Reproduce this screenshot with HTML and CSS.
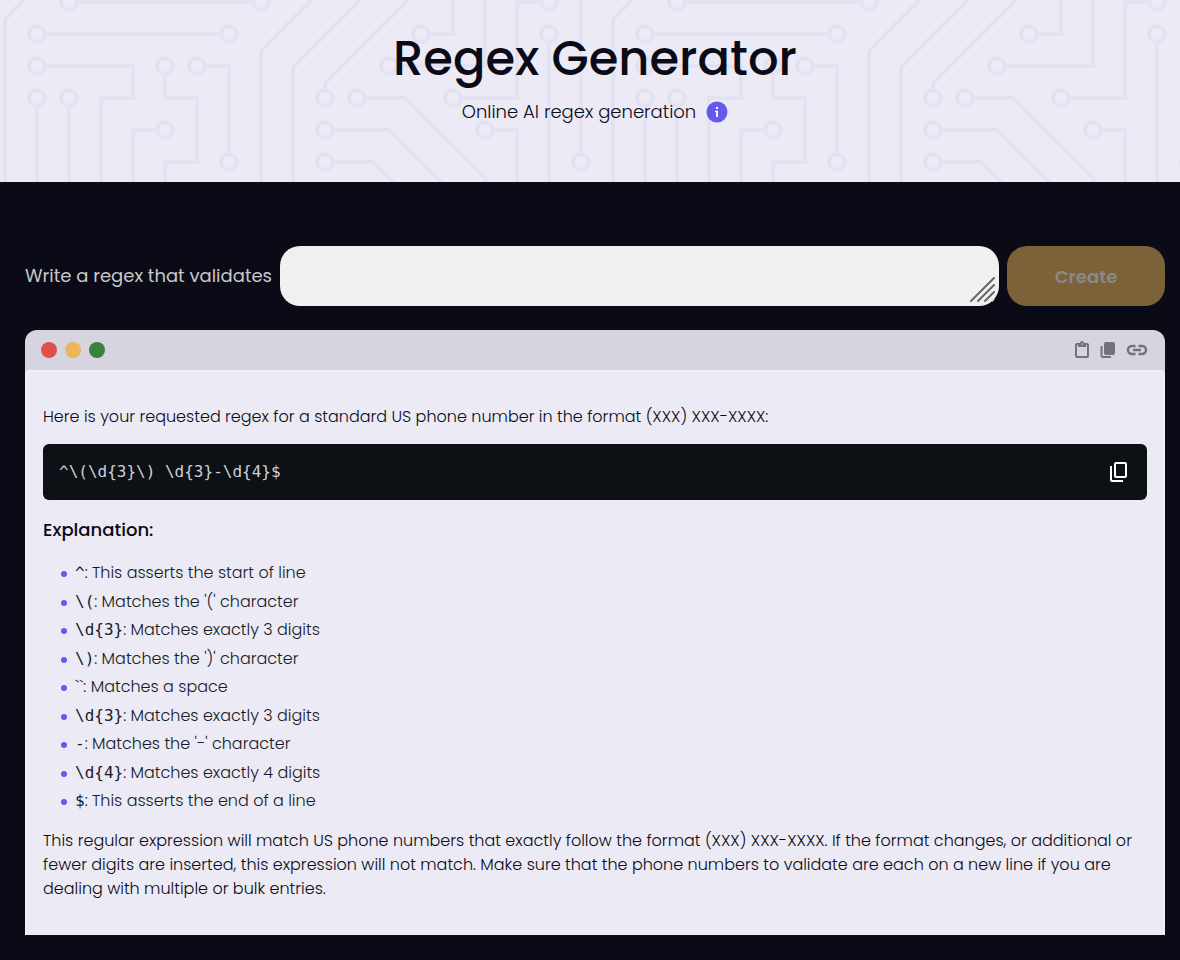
FILE: index.html
```html
<!DOCTYPE html>
<html lang="en">
<head>
  <meta charset="UTF-8">
  <meta name="viewport" content="width=device-width, initial-scale=1.0">
  <title>Regex Generator</title>
  <link rel="stylesheet" href="styles.css">
</head>
<body>
  <header class="hero">
    <h1 class="hero-title">Regex Generator</h1>
    <div class="hero-subtitle">
      <p>Online AI regex generation</p>
      <button class="info-button" type="button" aria-label="More information">
        <svg viewBox="0 0 22 22" width="22" height="22">
          <circle cx="11" cy="11" r="10.5" fill="#6459ec"/>
          <path d="M10 6h2v2h-2zM10 9.800h2v6.200h-2z" fill="#fff"/>
          <path d="M9 9.800h3v1.200H9z" fill="#fff"/>
        </svg>
      </button>
    </div>
  </header>

  <main class="content">
    <form class="prompt">
      <label class="prompt-label" for="prompt">Write a regex that validates</label>
      <div class="prompt-field">
        <textarea class="prompt-input" id="prompt" rows="1"></textarea>
        <svg class="prompt-grip" viewBox="0 0 28 28" width="28" height="28">
          <path d="M2 25 25 2M9 25 25 9M16 25 25 16" fill="none" stroke="#666" stroke-width="2" stroke-linecap="round"/>
          <path d="M23 26l3-3" fill="none" stroke="#999" stroke-width="1"/>
        </svg>
      </div>
      <button class="create-button" type="submit" disabled>Create</button>
    </form>

    <section class="window">
      <div class="window-bar">
        <div class="window-dots">
          <span class="dot red"></span>
          <span class="dot yellow"></span>
          <span class="dot green"></span>
        </div>
        <div class="window-actions">
          <button type="button" aria-label="Paste">
            <svg viewBox="0 0 16 18" width="16" height="18">
              <path d="M3 3h10a1 1 0 0 1 1 1v11a1 1 0 0 1-1 1H3a1 1 0 0 1-1-1V4a1 1 0 0 1 1-1z" fill="none" stroke="#73717c" stroke-width="2"/>
              <path d="M4 2h2a2 2 0 0 1 4 0h2v4H4z" fill="#73717c"/>
              <circle cx="8" cy="3" r=".8" fill="#d6d4de"/>
            </svg>
          </button>
          <button type="button" aria-label="Copy">
            <svg viewBox="0 0 16 18" width="16" height="18">
              <rect x="4" y="1" width="11" height="13" rx="2" fill="#73717c"/>
              <path d="M1.500 5v9.500a1.500 1.500 0 0 0 1.500 1.500h8" fill="none" stroke="#73717c" stroke-width="2"/>
            </svg>
          </button>
          <button type="button" aria-label="Copy link">
            <svg viewBox="0 0 22 18" width="22" height="18">
              <path d="M9.500 5H6a4 4 0 0 0 0 8h3.500M12.500 5H16a4 4 0 0 1 0 8h-3.500M7 9h8" fill="none" stroke="#73717c" stroke-width="2.400"/>
            </svg>
          </button>
        </div>
      </div>

      <div class="window-body">
        <p>Here is your requested regex for a standard US phone number in the format (XXX) XXX-XXXX:</p>
        <div class="code-block">
          <code>^\(\d{3}\) \d{3}-\d{4}$</code>
          <button type="button" aria-label="Copy code">
            <svg viewBox="0 0 20 22" width="20" height="22">
              <rect x="6" y="2" width="11" height="14" rx="1" fill="none" stroke="#fff" stroke-width="2"/>
              <path d="M2 5v14a1 1 0 0 0 1 1h11" fill="none" stroke="#fff" stroke-width="2"/>
            </svg>
          </button>
        </div>
        <h2>Explanation:</h2>
        <ul>
          <li><code>^</code>: This asserts the start of line</li>
          <li><code>\(</code>: Matches the '(' character</li>
          <li><code>\d{3}</code>: Matches exactly 3 digits</li>
          <li><code>\)</code>: Matches the ')' character</li>
          <li>``: Matches a space</li>
          <li><code>\d{3}</code>: Matches exactly 3 digits</li>
          <li><code>-</code>: Matches the '-' character</li>
          <li><code>\d{4}</code>: Matches exactly 4 digits</li>
          <li><code>$</code>: This asserts the end of a line</li>
        </ul>
        <p>This regular expression will match US phone numbers that exactly follow the format (XXX) XXX-XXXX. If the format changes, or additional or fewer digits are inserted, this expression will not match. Make sure that the phone numbers to validate are each on a new line if you are dealing with multiple or bulk entries.</p>
      </div>
    </section>
  </main>
</body>
</html>
```
FILE: styles.css
```css
/* General Reset */
* {
  margin: 0;
  padding: 0;
  box-sizing: border-box;
}

body {
  font-family: Poppins, Inter, sans-serif;
  font-size: 16px;
  font-weight: 300;
  line-height: 24px;
  color: #0b0b17;
  background-color: #0b0b17;
}

button {
  border: none;
  background: none;
  font-family: inherit;
  cursor: pointer;
}

svg {
  display: block;
}

/* Hero with circuit board pattern */
.hero {
  display: flex;
  flex-direction: column;
  align-items: center;
  gap: 9px;
  padding: 29px 15px 56px 25px;
  background-color: #eceaf4;
  background-image: url("data:image/svg+xml,%3Csvg xmlns='http://www.w3.org/2000/svg' width='608' height='182' fill='none' stroke='%23e3e2f3' stroke-width='4'%3E%3Cpath d='M25-1 5 19V182M79 2H251M47 34H219M47 66H133V98H101V182M37 108V182M69 108V182M165 76V98H197V162H165V182M207 66H229V152M155 130H133V182M312-1 261 51V182M361-1 293 67V182M409-1 325 83V88M367 98H405L485 178V182M335 130H389L441 182M335 162H373L393 182M431 34H453V0M399 66H485V0M463 98H517V0M517 2H539M495 130H517V182M549 44V182M581 0V152'/%3E%3Cg%3E%3Ccircle cx='69' cy='2' r='8'/%3E%3Ccircle cx='261' cy='2' r='8'/%3E%3Ccircle cx='37' cy='34' r='8'/%3E%3Ccircle cx='229' cy='34' r='8'/%3E%3Ccircle cx='37' cy='66' r='8'/%3E%3Ccircle cx='37' cy='98' r='8'/%3E%3Ccircle cx='69' cy='98' r='8'/%3E%3Ccircle cx='165' cy='66' r='8'/%3E%3Ccircle cx='197' cy='66' r='8'/%3E%3Ccircle cx='229' cy='162' r='8'/%3E%3Ccircle cx='165' cy='130' r='8'/%3E%3Ccircle cx='325' cy='98' r='8'/%3E%3Ccircle cx='357' cy='98' r='8'/%3E%3Ccircle cx='325' cy='130' r='8'/%3E%3Ccircle cx='325' cy='162' r='8'/%3E%3Ccircle cx='421' cy='34' r='8'/%3E%3Ccircle cx='389' cy='66' r='8'/%3E%3Ccircle cx='453' cy='98' r='8'/%3E%3Ccircle cx='549' cy='2' r='8'/%3E%3Ccircle cx='485' cy='130' r='8'/%3E%3Ccircle cx='549' cy='34' r='8'/%3E%3Ccircle cx='581' cy='162' r='8'/%3E%3C/g%3E%3C/svg%3E");
  background-repeat: repeat-x;
}

.hero-title {
  font-size: 48px;
  font-weight: 500;
  line-height: 60px;
}

.hero-subtitle {
  display: flex;
  align-items: center;
  gap: 10px;
  font-size: 18px;
  line-height: 28px;
}

/* Prompt Form */
.content {
  padding: 64px 15px 25px 25px;
}

.prompt {
  display: flex;
  align-items: center;
  gap: 8px;
  margin-bottom: 24px;
}

.prompt-label {
  color: #c8c8ca;
  font-size: 18px;
  font-weight: 400;
  white-space: nowrap;
}

.prompt-field {
  position: relative;
  flex: 1;
}

.prompt-input {
  display: block;
  width: 100%;
  height: 60px;
  padding: 16px 20px;
  border: none;
  border-radius: 20px;
  background-color: #f0f0f0;
  font-family: inherit;
  font-size: 18px;
  resize: none;
}

.prompt-grip {
  position: absolute;
  right: 2px;
  bottom: 2px;
  pointer-events: none;
}

.create-button {
  flex: 0 0 158px;
  height: 60px;
  border-radius: 20px;
  background-color: #7b6239;
  color: #8b888a;
  font-size: 18px;
  font-weight: 600;
}

/* Result Window */
.window {
  border-radius: 12px 12px 0 0;
  background-color: #d6d4de;
  overflow: hidden;
}

.window-bar {
  display: flex;
  justify-content: space-between;
  align-items: center;
  height: 40px;
  padding: 0 17px 0 16px;
}

.window-dots {
  display: flex;
  gap: 8px;
}

.dot {
  width: 16px;
  height: 16px;
  border-radius: 50%;
}

.red {
  background-color: #df504d;
}

.yellow {
  background-color: #ebb55b;
}

.green {
  background-color: #3a8040;
}

.window-actions {
  display: flex;
  gap: 10px;
}

.window-body {
  padding: 33px 16px 34px;
  border: 2px solid #f0eff4;
  border-bottom: none;
  border-radius: 4px 4px 0 0;
  background-color: #eceaf4;
}

.code-block {
  display: flex;
  justify-content: space-between;
  align-items: center;
  height: 56px;
  margin: 15px 0 16px;
  padding: 0 18px 0 16px;
  border-radius: 6px;
  background-color: #0d1116;
  color: #c9d1d9;
}

code {
  font-family: "DejaVu Sans Mono", monospace;
  font-size: 16px;
}

.window-body h2 {
  font-size: 18px;
  font-weight: 500;
  line-height: 28px;
}

.window-body ul {
  margin: 15px 0 14px;
  padding-left: 18px;
  color: #161b29;
  line-height: 28px;
  list-style: none;
}

.window-body li:nth-child(odd) {
  margin-bottom: 1px;
}

.window-body li::before {
  content: "";
  display: inline-block;
  width: 6px;
  height: 6px;
  margin-right: 8px;
  border-radius: 50%;
  background-color: #6459ec;
  vertical-align: middle;
}
```
